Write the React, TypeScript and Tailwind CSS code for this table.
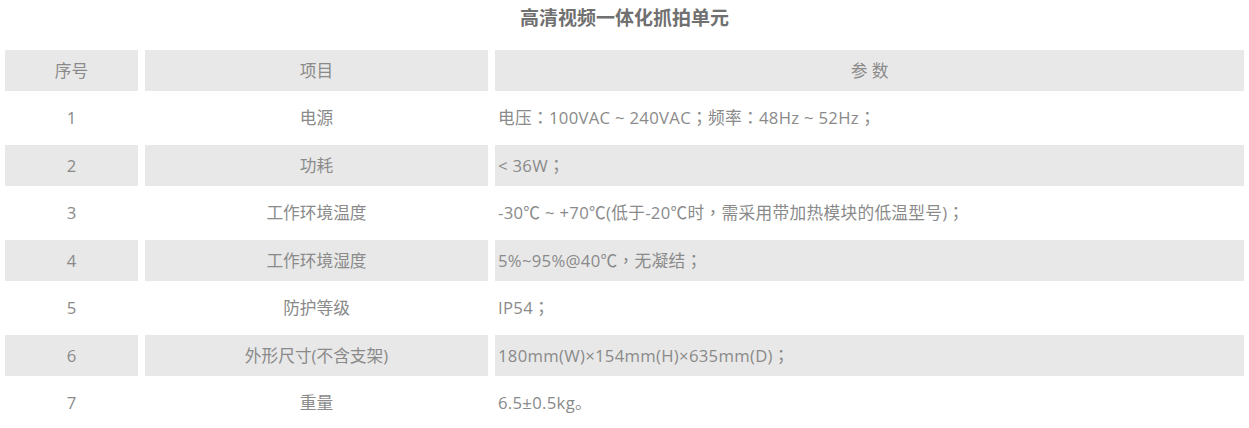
const rows = [
  { no: '1', item: '电源', value: '电压：100VAC ~ 240VAC；频率：48Hz ~ 52Hz；' },
  { no: '2', item: '功耗', value: '< 36W；' },
  { no: '3', item: '工作环境温度', value: '-30℃ ~ +70℃(低于-20℃时，需采用带加热模块的低温型号)；' },
  { no: '4', item: '工作环境湿度', value: '5%~95%@40℃，无凝结；' },
  { no: '5', item: '防护等级', value: 'IP54；' },
  { no: '6', item: '外形尺寸(不含支架)', value: '180mm(W)×154mm(H)×635mm(D)；' },
  { no: '7', item: '重量', value: '6.5±0.5kg。' },
]

// centred full-width punctuation, like the original page's font
function Punct({ text }: { text: string }) {
  const parts = text.split(/([：；，])/)
  return (
    <>
      {parts.map((p, i) =>
        /^[：；，]$/.test(p) ? (
          <span key={i} className="font-['Noto_Sans_CJK_TC',sans-serif]">{p}</span>
        ) : (
          <span key={i}>{p}</span>
        )
      )}
    </>
  )
}

export default function App() {
  return (
    <div className="w-[1249px] h-[428px] bg-white text-[#8a8a8a] font-['Open_Sans','Noto_Sans_CJK_SC',sans-serif]">
      <h1 className="h-[37px] leading-[37px] text-center text-[19px] font-bold text-[#707070]">
        高清视频一体化抓拍单元
      </h1>
      <div className="mt-[13px] ml-[5px] grid grid-cols-[133px_343px_749px] gap-[7px] auto-rows-[40.5px] text-[16.7px]">
        <div className="bg-[#e8e8e8] flex items-center justify-center">序号</div>
        <div className="bg-[#e8e8e8] flex items-center justify-center">项目</div>
        <div className="bg-[#e8e8e8] flex items-center justify-center">参 数</div>
        {rows.map((r, i) => {
          const bg = i % 2 === 1 ? 'bg-[#e8e8e8]' : 'bg-white'
          return [
            <div key={r.no + 'a'} className={`${bg} flex items-center justify-center`}>{r.no}</div>,
            <div key={r.no + 'b'} className={`${bg} flex items-center justify-center`}>{r.item}</div>,
            <div key={r.no + 'c'} className={`${bg} flex items-center pl-[3px] whitespace-pre tracking-[0.3px]`}>
              <Punct text={r.value} />
            </div>,
          ]
        })}
      </div>
    </div>
  )
}
